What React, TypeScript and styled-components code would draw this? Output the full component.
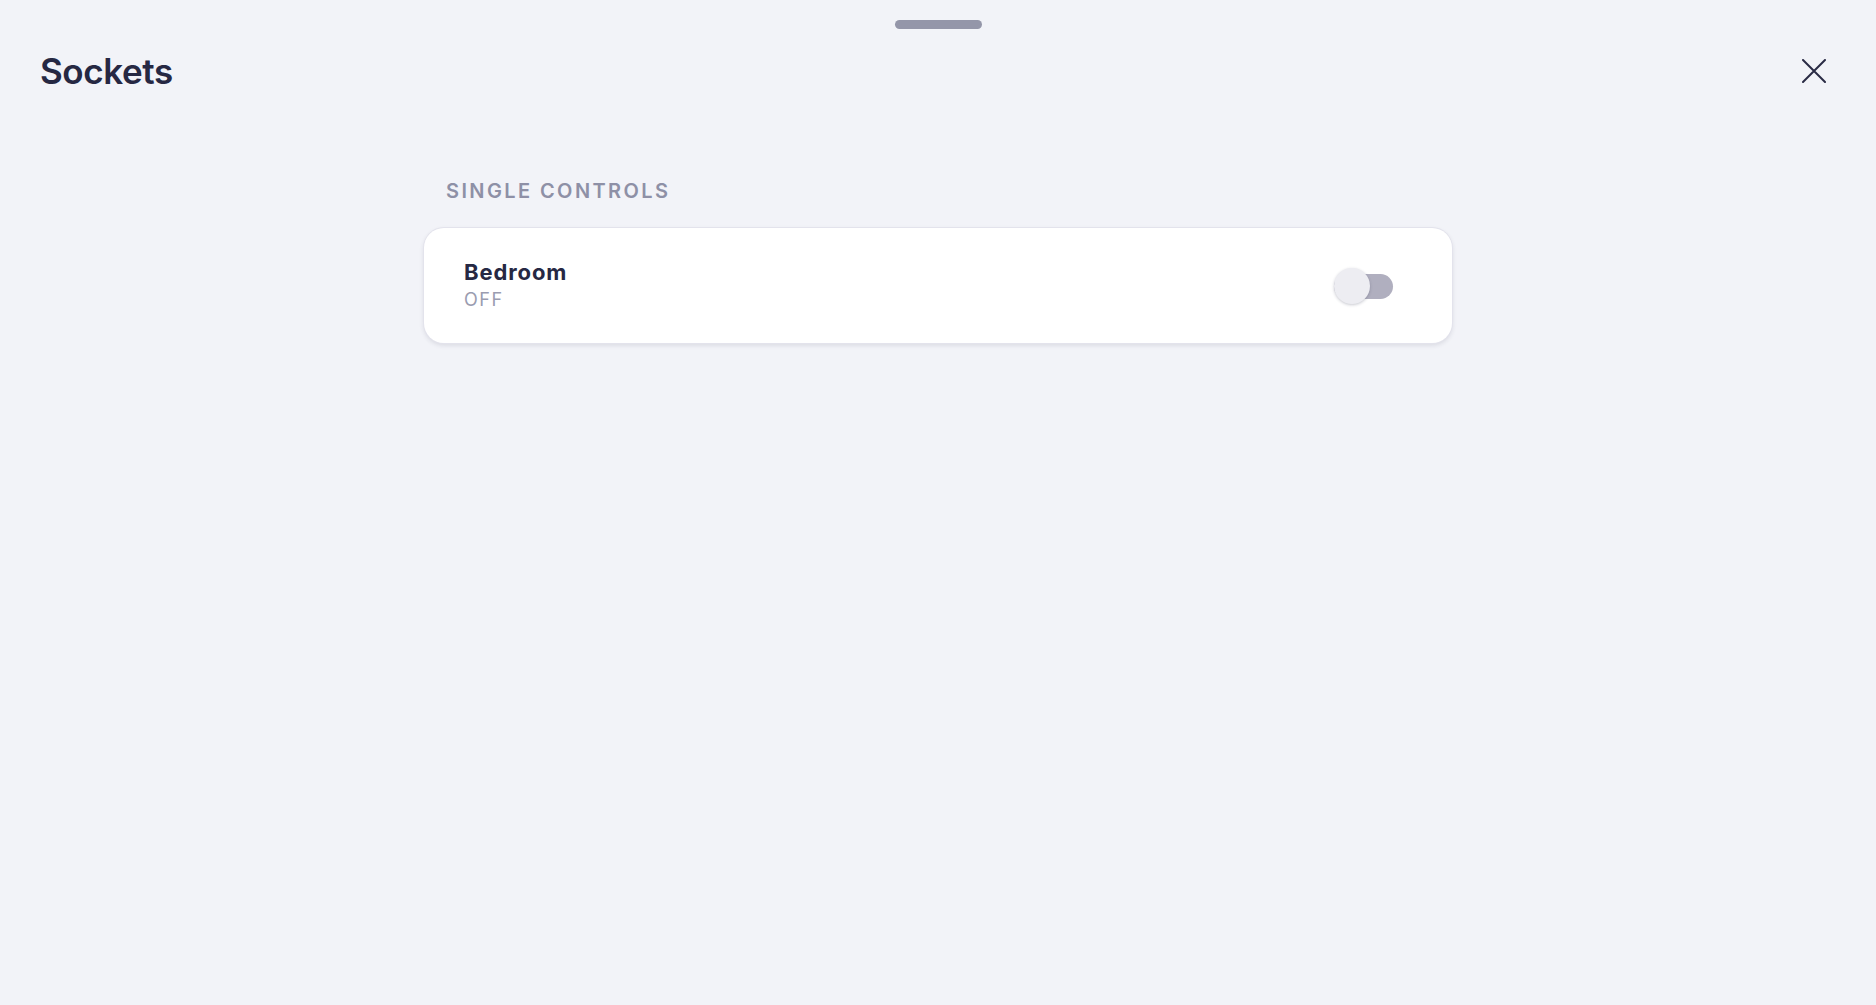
import React, { useState } from "react";
import styled, { createGlobalStyle } from "styled-components";

const GlobalStyle = createGlobalStyle`
  html, body {
    margin: 0;
    padding: 0;
    background: #f2f3f8;
    font-family: Inter, Lato, sans-serif;
  }
  * { box-sizing: border-box; }
`;

const Page = styled.div`
  min-height: 100vh;
  background: #f2f3f8;
  display: flex;
  flex-direction: column;
`;

const HandleBar = styled.div`
  display: flex;
  justify-content: center;
  padding-top: 20px;
`;

const Handle = styled.div`
  width: 87px;
  height: 9px;
  border-radius: 5px;
  background: #9496a9;
`;

const Header = styled.header`
  display: flex;
  align-items: center;
  justify-content: space-between;
  padding: 20px 48px 0 40px;
`;

const Title = styled.h1`
  margin: 0;
  font-family: Inter, Lato, sans-serif;
  font-weight: 600;
  font-size: 35px;
  line-height: 44px;
  color: #262843;
  letter-spacing: -0.4px;
`;

const CloseButton = styled.button`
  width: 28px;
  height: 28px;
  padding: 0;
  border: none;
  background: transparent;
  display: flex;
  align-items: center;
  justify-content: center;
  cursor: pointer;
  color: #2a2b45;
`;

const Content = styled.main`
  width: 1028px;
  margin: 0 auto;
  padding-top: 86px;
  display: flex;
  flex-direction: column;
`;

const SectionLabel = styled.h2`
  margin: 0 0 25px 22px;
  font-family: Inter, Lato, sans-serif;
  font-weight: 600;
  font-size: 20px;
  line-height: 24px;
  letter-spacing: 2.4px;
  color: #8e90a6;
  text-transform: uppercase;
`;

const Card = styled.div`
  display: flex;
  align-items: center;
  justify-content: space-between;
  background: #ffffff;
  border-radius: 20px;
  padding: 31px 59px 32px 40px;
  box-shadow: 0 0 0 1px #e3e3ec, 0 2px 5px rgba(40, 42, 70, 0.14);
`;

const Info = styled.div`
  display: flex;
  flex-direction: column;
  gap: 4px;
`;

const Name = styled.div`
  font-family: Inter, Lato, sans-serif;
  font-weight: 700;
  font-size: 22px;
  line-height: 26px;
  letter-spacing: 0.9px;
  color: #262843;
`;

const State = styled.div`
  font-family: Inter, Lato, sans-serif;
  font-weight: 400;
  font-size: 18px;
  line-height: 22px;
  letter-spacing: 1.6px;
  color: #9a9cb0;
`;

const Track = styled.button<{ $on: boolean }>`
  position: relative;
  width: 59px;
  height: 25px;
  padding: 0;
  border: none;
  border-radius: 13px;
  background: ${(p) => (p.$on ? "#6c6fe0" : "#b0afbf")};
  cursor: pointer;
  margin-top: 2px;
`;

const Knob = styled.span<{ $on: boolean }>`
  position: absolute;
  top: 50%;
  left: ${(p) => (p.$on ? "24px" : "0px")};
  width: 36px;
  height: 36px;
  margin-top: -18px;
  border-radius: 50%;
  background: #ededf2;
  box-shadow: 0 1px 3px rgba(40, 42, 70, 0.25);
  transition: left 0.15s;
`;

export default function App() {
  const [on, setOn] = useState(false);
  return (
    <Page>
      <GlobalStyle />
      <HandleBar>
        <Handle />
      </HandleBar>
      <Header>
        <Title>Sockets</Title>
        <CloseButton aria-label="Close">
          <svg width="24" height="24" viewBox="0 0 24 24" fill="none">
            <path d="M1 1 L23 23 M23 1 L1 23" stroke="currentColor" strokeWidth="2" strokeLinecap="round" />
          </svg>
        </CloseButton>
      </Header>
      <Content>
        <SectionLabel>Single Controls</SectionLabel>
        <Card>
          <Info>
            <Name>Bedroom</Name>
            <State>{on ? "ON" : "OFF"}</State>
          </Info>
          <Track $on={on} onClick={() => setOn(!on)} aria-label="Toggle Bedroom">
            <Knob $on={on} />
          </Track>
        </Card>
      </Content>
    </Page>
  );
}
